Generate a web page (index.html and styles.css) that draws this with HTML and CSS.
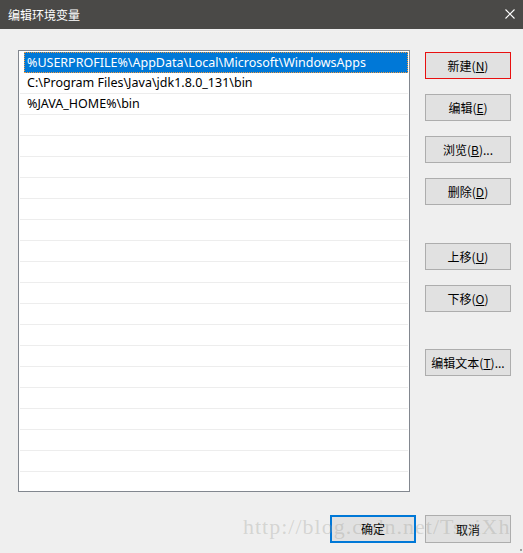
FILE: index.html
```html
<!DOCTYPE html>
<html lang="zh-CN">
<head>
<meta charset="utf-8">
<title>编辑环境变量</title>
<link rel="stylesheet" href="styles.css">
</head>
<body>
<div class="window">
  <div class="titlebar">
    <span class="title">编辑环境变量</span>
    <svg class="close" width="10" height="10" viewBox="0 0 10 10"><path d="M0.5 0.5 L9.5 9.5 M9.5 0.5 L0.5 9.5" stroke="#fff" stroke-width="1.1" fill="none"/></svg>
  </div>
  <div class="content">
    <div class="main">
      <div class="list">
        <div class="row selected"><span class="sel">%USERPROFILE%\AppData\Local\Microsoft\WindowsApps</span></div>
        <div class="row">C:\Program Files\Java\jdk1.8.0_131\bin</div>
        <div class="row">%JAVA_HOME%\bin</div>
        <div class="row"></div>
        <div class="row"></div>
        <div class="row"></div>
        <div class="row"></div>
        <div class="row"></div>
        <div class="row"></div>
        <div class="row"></div>
        <div class="row"></div>
        <div class="row"></div>
        <div class="row"></div>
        <div class="row"></div>
        <div class="row"></div>
        <div class="row"></div>
        <div class="row"></div>
        <div class="row"></div>
        <div class="row"></div>
        <div class="row"></div>
        <div class="row"></div>
      </div>
      <div class="side">
        <button class="btn btn-hot">新建(<u>N</u>)</button>
        <button class="btn">编辑(<u>E</u>)</button>
        <button class="btn">浏览(<u>B</u>)...</button>
        <button class="btn">删除(<u>D</u>)</button>
        <button class="btn gap-a">上移(<u>U</u>)</button>
        <button class="btn">下移(<u>O</u>)</button>
        <button class="btn gap-b">编辑文本(<u>T</u>)...</button>
      </div>
    </div>
    <div class="footer">
      <button class="btn btn-wide btn-default">确定</button>
      <button class="btn btn-wide">取消</button>
    </div>
  </div>
  <div class="watermark">http://blog.csdn.net/TsuiXh</div>
  <div class="grip"></div>
</div>
</body>
</html>
```
FILE: styles.css
```css
html, body {
  margin: 0;
  padding: 0;
}
body {
  background: #efefef;
  font-family: "Noto Sans", "Noto Sans CJK SC", sans-serif;
  font-size: 12px;
  color: #000;
}
.window {
  position: relative;
  width: 523px;
  height: 553px;
  overflow: hidden;
  background: #efefef;
}
.titlebar {
  height: 29px;
  background: #4a4947;
  display: flex;
  align-items: center;
  justify-content: space-between;
  padding: 0 8px 0 8px;
  box-sizing: border-box;
}
.title {
  color: #fff;
  font-family: "Noto Sans CJK SC", sans-serif;
  font-size: 12px;
  line-height: 29px;
}
.close {
  display: block;
  margin-top: -2px;
}
.content {
  padding: 21px 12px 0 18px;
}
.main {
  display: flex;
  gap: 15px;
}
.list {
  width: 392px;
  height: 442px;
  box-sizing: border-box;
  border: 1px solid #82878f;
  background: #fff;
  padding: 1px;
  overflow: hidden;
  font-size: 12.5px;
}
.row {
  height: 21px;
  box-sizing: border-box;
  border-bottom: 1px solid #ededed;
  padding-left: 7px;
  line-height: 20px;
  white-space: nowrap;
}
.row.selected {
  padding-left: 4px;
  border-bottom: none;
}
.sel {
  display: block;
  height: 21px;
  box-sizing: border-box;
  background: #0078d7;
  color: #fff;
  border: 1px dotted #f49a3c;
  padding-left: 2px;
  line-height: 19px;
}
.side {
  display: flex;
  flex-direction: column;
  padding-top: 2px;
}
.btn {
  width: 86px;
  height: 27px;
  box-sizing: border-box;
  background: #e1e1e1;
  border: 1px solid #adadad;
  font-family: "Noto Sans CJK SC", sans-serif;
  font-size: 12px;
  color: #000;
  padding: 0;
  margin: 0 0 15px 0;
  line-height: 25px;
  text-align: center;
}
.btn u {
  text-underline-offset: 1px;
}
.btn-hot {
  border-color: #e81010;
}
.gap-a {
  margin-top: 23px;
}
.gap-b {
  margin-top: 22px;
}
.footer {
  display: flex;
  justify-content: flex-end;
  gap: 9px;
  margin-top: 23px;
}
.btn-wide {
  height: 28px;
  margin: 0;
}
.btn-default {
  border: 2px solid #0078d7;
  line-height: 24px;
}
.watermark {
  position: absolute;
  left: 243px;
  top: 514px;
  font-family: "Liberation Serif", serif;
  font-size: 22px;
  letter-spacing: 1px;
  color: rgba(150, 150, 140, 0.3);
  white-space: nowrap;
  pointer-events: none;
}
.grip {
  position: absolute;
  right: 1px;
  bottom: 2px;
  width: 2px;
  height: 2px;
  background: #a0a0a0;
}
```
